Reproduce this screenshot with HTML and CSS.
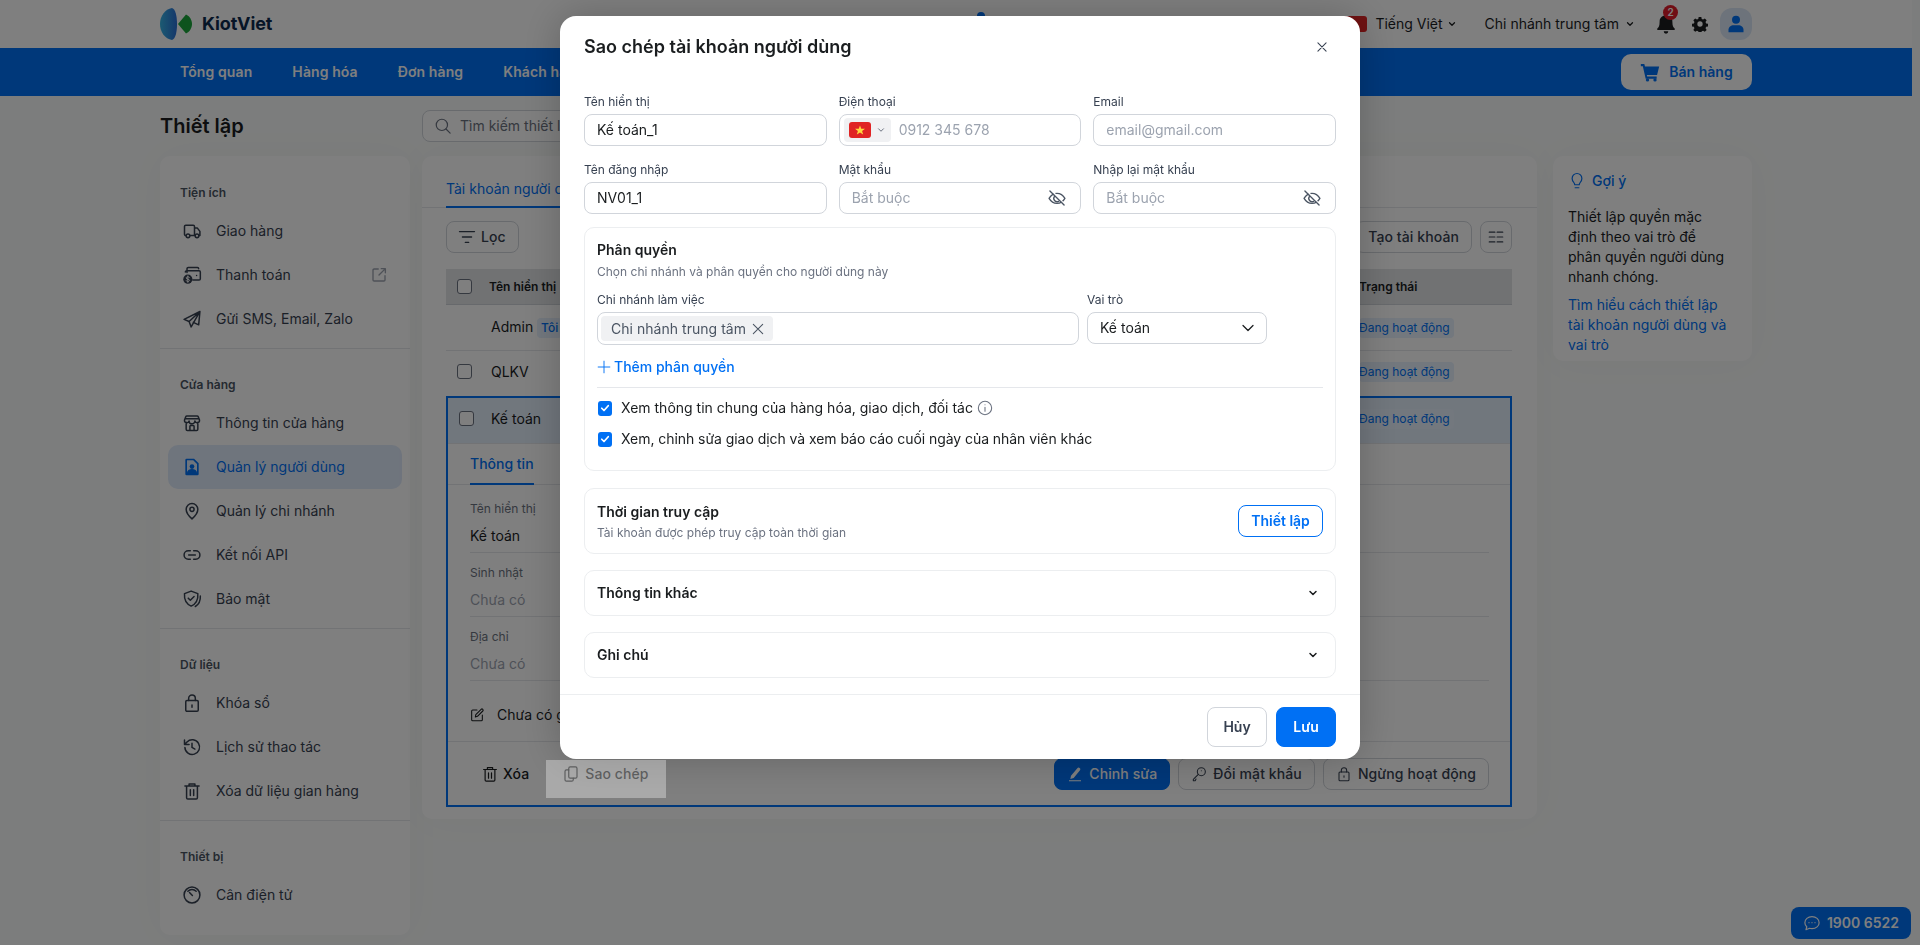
FILE: index.html
```html
<!DOCTYPE html>
<html lang="vi">
<head>
<meta charset="utf-8">
<title>Thiết lập</title>
<link rel="stylesheet" href="styles.css">
</head>
<body>
<svg class="sprite" width="0" height="0" aria-hidden="true">
  <symbol id="i-truck" viewBox="0 0 24 24"><path d="M5 17.5H4.5A1.5 1.5 0 0 1 3 16V6.5A1.5 1.5 0 0 1 4.5 5h9A1.5 1.5 0 0 1 15 6.5v11H9.5M15 8.5h3.5l3 4v5h-1M15.8 17.5H15"/><circle cx="7.2" cy="17.8" r="2.2"/><circle cx="18" cy="17.8" r="2.2"/></symbol>
  <symbol id="i-card" viewBox="0 0 24 24"><path d="M6 9V4.500A1.500 1.500 0 0 1 7.500 3h11A1.500 1.500 0 0 1 20 4.500M4 8.500A1.500 1.500 0 0 1 5.500 7h15A1.500 1.500 0 0 1 22 8.500v8a1.500 1.500 0 0 1-1.500 1.500H13M17.500 12.500h.01"/><circle class="fill" cx="7" cy="17" r="5.500"/><path class="coin" d="M9 15.200c-.5-.7-1.200-1-2-1-1.100 0-2 .6-2 1.400 0 1.800 4 1 4 2.800 0 .8-.9 1.400-2 1.400-.8 0-1.600-.3-2-1M7 13.200v7.600"/></symbol>
  <symbol id="i-plane" viewBox="0 0 24 24"><path d="M21.500 3 2.500 12.500l6 2.500 2.500 6.500zM21.500 3 8.500 15M21.500 3 20 19l-6.500-3"/></symbol>
  <symbol id="i-store" viewBox="0 0 24 24"><path d="M5 11v8.500A1.500 1.500 0 0 0 6.500 21h11a1.500 1.500 0 0 0 1.500-1.500V11M3 8.500 4.500 4.500A1.500 1.500 0 0 1 6 3.500h12a1.500 1.500 0 0 1 1.500 1L21 8.500a2.800 2.800 0 0 1-5.500 1 3.500 3.500 0 0 1-7 0 2.800 2.800 0 0 1-5.500-1ZM3.500 7h17M9.500 21v-5a1 1 0 0 1 1-1h3a1 1 0 0 1 1 1v5"/></symbol>
  <symbol id="i-userdoc" viewBox="0 0 24 24"><path class="fill doc" d="M5.500 2h9L20 7.500v13a1.500 1.500 0 0 1-1.500 1.500h-13A1.500 1.500 0 0 1 4 20.500v-17A1.500 1.500 0 0 1 5.500 2Zm.5 2v14.800a6 4.500 0 0 1 12 0V8.500L13.500 4Z"/><circle class="fill" cx="12" cy="11.500" r="2.800"/></symbol>
  <symbol id="i-pin" viewBox="0 0 24 24"><path d="M12 21.500S5 15.500 5 10a7 7 0 0 1 14 0c0 5.500-7 11.500-7 11.500Z"/><circle cx="12" cy="10" r="2.500"/></symbol>
  <symbol id="i-link" viewBox="0 0 24 24"><path d="M10 7H7.500a5 5 0 0 0 0 10H10M14 7h2.500a5 5 0 0 1 0 10H14M8 12h8"/></symbol>
  <symbol id="i-shield" viewBox="0 0 24 24"><path d="M11 2.500 19 5.500c.5 6.500-2.500 12.500-8 15-5.500-2.500-8.500-8.500-8-15ZM7.500 11l2.500 2.500 4.500-4.500M22 8.500c.3 5-2 10-6 12.500"/></symbol>
  <symbol id="i-lock" viewBox="0 0 24 24"><rect x="4.500" y="9" width="15" height="13" rx="1.500"/><path d="M8 9V6.500a4 4 0 0 1 8 0V9M12 14.500v2.500"/></symbol>
  <symbol id="i-history" viewBox="0 0 24 24"><path d="M3.500 12.500A8.800 8.800 0 1 0 6 6L3 9M3 3.500V9h5.500M12 7.500v5l3.500 2"/></symbol>
  <symbol id="i-trash" viewBox="0 0 24 24"><path d="M3.500 6h17M8.500 6V3.500h7V6M5.500 6v14a1.500 1.500 0 0 0 1.500 1.500h10a1.500 1.500 0 0 0 1.500-1.500V6M10 10.500v7M14 10.500v7"/></symbol>
  <symbol id="i-gauge" viewBox="0 0 24 24"><circle cx="12" cy="12" r="9.500"/><path d="M7 7.500a7 7 0 0 1 10 0M9 9l3.500 3.500"/></symbol>
  <symbol id="i-ext" viewBox="0 0 24 24"><path d="M11 4H5.500A1.500 1.500 0 0 0 4 5.500v13A1.500 1.500 0 0 0 5.500 20h13a1.500 1.500 0 0 0 1.500-1.500V13M12 12l8.500-8.500M15 3.500h5.500V9"/></symbol>
  <symbol id="i-eyeoff" viewBox="0 0 24 24"><path d="M2.500 12.500s3.500-6 9.500-6 9.500 6 9.500 6-3.500 6-9.500 6-9.500-6-9.500-6Z"/><path d="M9 10a4 4 0 0 0 5 6"/><path class="gap" d="M5 2.500l16 17"/><path d="M3.500 3.500l17 17"/></symbol>
  <symbol id="i-chev" viewBox="0 0 24 24"><path d="m6 9 6 6 6-6"/></symbol>
  <symbol id="i-x" viewBox="0 0 24 24"><path d="M5 5l14 14M19 5 5 19"/></symbol>
  <symbol id="i-add" viewBox="0 0 24 24"><path d="M12 2v20M2 12h20"/></symbol>
  <symbol id="i-edit" viewBox="0 0 24 24"><path d="M12 4.500H5.500A1.500 1.500 0 0 0 4 6v13a1.500 1.500 0 0 0 1.500 1.500h13A1.500 1.500 0 0 0 20 19v-7M9.500 15l.7-3.500 8-8a1.600 1.600 0 0 1 2.500 2.500l-8 8Z"/></symbol>
  <symbol id="i-copy" viewBox="0 0 24 24"><rect x="9" y="2.500" width="11" height="15" rx="2"/><path d="M9 6.500H6a2 2 0 0 0-2 2v11a2 2 0 0 0 2 2h7a2 2 0 0 0 2-2v-2"/></symbol>
  <symbol id="i-key" viewBox="0 0 24 24"><circle cx="15.500" cy="8.500" r="6"/><path d="M11 12.500 3.500 20v2h3l1-2.500M15.500 7h.01"/></symbol>
  <symbol id="i-filter" viewBox="0 0 24 24"><path d="M3 5.500h18M6.500 12h11M10 18.500h4"/></symbol>
  <symbol id="i-search" viewBox="0 0 24 24"><circle cx="10.500" cy="10.500" r="7.500"/><path d="m16 16 5.500 5.500"/></symbol>
  <symbol id="i-cols" viewBox="0 0 24 24"><path d="M3 5.500h7.500M13.500 5.500H21M3 12h7.500M13.500 12H21M3 18.500h7.500M13.500 18.500H21"/></symbol>
  <symbol id="i-bulb" viewBox="0 0 24 24"><path d="M9 17c0-3-3.500-4-3.500-8.500a6.500 6.500 0 0 1 13 0C18.500 13 15 14 15 17ZM9.500 21h5"/></symbol>
  <symbol id="i-chat" viewBox="0 0 24 24"><path d="M12 3.500c5.500 0 9.500 3.500 9.500 8s-4 8-9.500 8c-1.200 0-2.300-.2-3.300-.5L4 21l1-4c-1.500-1.400-2.500-3.300-2.500-5.500 0-4.500 4-8 9.500-8Z"/><path d="M8 11.500h.01M12 11.500h.01M16 11.500h.01"/></symbol>
  <symbol id="i-info" viewBox="0 0 24 24"><circle cx="12" cy="12" r="10"/><path d="M12 11v6M12 7h.01"/></symbol>
  <symbol id="i-check" viewBox="0 0 24 24"><path d="m5.500 12.500 4.500 4.500 8.500-9.500"/></symbol>
</svg>

<div class="page">
  <header class="hdr">
    <div class="wrap hdr-in">
      <div class="logo">
        <svg class="logo-mark" width="32" height="32" viewBox="0 0 32 32"><defs><linearGradient id="lg" x1="0" x2="1" y1="0" y2="0"><stop offset="0" stop-color="#38b4e4"/><stop offset="1" stop-color="#2a6fd6"/></linearGradient></defs><path fill="url(#lg)" d="M12 0C15.500 1 17 8 17 16S15.500 31 12 32C5 31 0 24 0 16S5 1 12 0Z"/><path fill="#1aa63a" d="M18 16 26 6.500C29.500 8 32 12 32 16S29.500 24 26 25.500Z"/></svg>
        <span class="logo-txt">KiotViet</span>
      </div>
      <span class="hdr-dot"></span>
      <div class="hdr-right">
        <span class="hdr-flag"></span>
        <span class="hdr-item lang">Tiếng Việt<svg class="ic-12 bold"><use href="#i-chev"/></svg></span>
        <span class="hdr-item branch">Chi nhánh trung tâm<svg class="ic-12 bold"><use href="#i-chev"/></svg></span>
        <span class="bell">
          <svg width="22" height="24" viewBox="0 0 24 24"><path fill="#1a1d1f" d="M12 1a2 2 0 0 1 2 1.800A7 7 0 0 1 19 10c0 4 .8 5.500 2.500 7v1.500h-19V17C4.200 15.500 5 14 5 10a7 7 0 0 1 5-7.200A2 2 0 0 1 12 1ZM9.500 20h5a2.500 2.500 0 0 1-5 0Z"/></svg>
          <span class="badge">2</span>
        </span>
        <svg class="gear" width="16" height="16" viewBox="0 0 24 24"><path fill="#1a1d1f" fill-rule="evenodd" d="M10 1.500h4l.6 3 2 .9 2.600-1.700 2.800 2.800-1.700 2.600.9 2 3 .6v4l-3 .6-.9 2 1.700 2.600-2.800 2.800-2.600-1.700-2 .9-.6 3h-4l-.6-3-2-.9-2.600 1.700-2.800-2.800 1.700-2.600-.9-2-3-.6v-4l3-.6.9-2L2 6.500l2.800-2.800 2.600 1.700 2-.9ZM12 8a4 4 0 1 0 0 8 4 4 0 0 0 0-8Z"/></svg>
        <span class="avatar"><svg width="20" height="20" viewBox="0 0 24 24"><circle cx="12" cy="7" r="4.800" fill="#0070f4"/><path fill="#0070f4" d="M3 22v-3c0-3.500 3-5.500 6-5.500h6c3 0 6 2 6 5.500v3Z"/></svg></span>
      </div>
    </div>
  </header>

  <nav class="nav">
    <div class="wrap nav-in">
      <a class="nav-a">Tổng quan</a>
      <a class="nav-a">Hàng hóa</a>
      <a class="nav-a">Đơn hàng</a>
      <a class="nav-a">Khách hàng</a>
      <button class="sell"><svg width="20" height="20" viewBox="0 0 24 24"><path fill="#0070f4" d="M1 2.500h4.200l.8 3H23l-2.500 10H8.200l.4 2H20v2.500H6.800L3.400 5H1Z"/><circle cx="9" cy="21.500" r="2" fill="#0070f4"/><circle cx="18" cy="21.500" r="2" fill="#0070f4"/></svg>Bán hàng</button>
    </div>
  </nav>

  <div class="wrap">
    <div class="title-row">
      <h1 class="h1">Thiết lập</h1>
      <div class="search"><svg class="ic-18 grey"><use href="#i-search"/></svg><span>Tìm kiếm thiết lập</span></div>
    </div>

    <div class="cols">
      <aside class="side">
        <section class="sec first">
          <div class="sec-t">Tiện ích</div>
          <a class="it"><svg class="ic"><use href="#i-truck"/></svg>Giao hàng</a>
          <a class="it"><svg class="ic"><use href="#i-card"/></svg>Thanh toán<svg class="ic ext"><use href="#i-ext"/></svg></a>
          <a class="it"><svg class="ic"><use href="#i-plane"/></svg>Gửi SMS, Email, Zalo</a>
        </section>
        <section class="sec">
          <div class="sec-t">Cửa hàng</div>
          <a class="it"><svg class="ic"><use href="#i-store"/></svg>Thông tin cửa hàng</a>
          <a class="it on"><svg class="ic"><use href="#i-userdoc"/></svg>Quản lý người dùng</a>
          <a class="it"><svg class="ic"><use href="#i-pin"/></svg>Quản lý chi nhánh</a>
          <a class="it"><svg class="ic"><use href="#i-link"/></svg>Kết nối API</a>
          <a class="it"><svg class="ic"><use href="#i-shield"/></svg>Bảo mật</a>
        </section>
        <section class="sec">
          <div class="sec-t">Dữ liệu</div>
          <a class="it"><svg class="ic"><use href="#i-lock"/></svg>Khóa sổ</a>
          <a class="it"><svg class="ic"><use href="#i-history"/></svg>Lịch sử thao tác</a>
          <a class="it"><svg class="ic"><use href="#i-trash"/></svg>Xóa dữ liệu gian hàng</a>
        </section>
        <section class="sec last">
          <div class="sec-t">Thiết bị</div>
          <a class="it"><svg class="ic"><use href="#i-gauge"/></svg>Cân điện tử</a>
        </section>
      </aside>

      <main class="main">
        <div class="tabs"><span class="tab">Tài khoản người dùng</span></div>
        <div class="bar">
          <button class="btn"><svg class="ic-20"><use href="#i-filter"/></svg>Lọc</button>
          <button class="btn push">Tạo tài khoản</button>
          <button class="btn square"><svg class="ic-18"><use href="#i-cols"/></svg></button>
        </div>
        <div class="tbl">
          <div class="row head"><span class="cb"></span><span>Tên hiển thị</span><span class="st">Trạng thái</span></div>
          <div class="row me-row"><span></span><span>Admin <em class="me">Tôi</em></span><span class="st"><span class="pill">Đang hoạt động</span></span></div>
          <div class="row"><span class="cb"></span><span>QLKV</span><span class="st"><span class="pill">Đang hoạt động</span></span></div>
          <div class="sel">
            <div class="row cur"><span class="cb"></span><span>Kế toán</span><span class="st"><span class="pill">Đang hoạt động</span></span></div>
            <div class="dtabs"><span class="dtab">Thông tin</span></div>
            <div class="fields">
              <div class="fld"><div class="fl">Tên hiển thị</div><div class="fv">Kế toán</div></div>
              <div class="fld"><div class="fl">Sinh nhật</div><div class="fv mute">Chưa có</div></div>
              <div class="fld"><div class="fl">Địa chỉ</div><div class="fv mute">Chưa có</div></div>
              <div class="note"><svg class="ic-16"><use href="#i-edit"/></svg>Chưa có ghi chú</div>
            </div>
            <div class="acts">
              <button class="ghost"><svg class="ic-18"><use href="#i-trash"/></svg>Xóa</button>
              <button class="ghost copy"><svg class="ic-18"><use href="#i-copy"/></svg>Sao chép</button>
              <button class="btn solid push"><svg width="16" height="16" viewBox="0 0 24 24"><path fill="#fff" d="M15.500 3.500a2.500 2.500 0 0 1 4 3L10 18l-5 1.500L6 14.500ZM3 21.500h18V23H3Z"/></svg>Chỉnh sửa</button>
              <button class="btn"><svg class="ic-16"><use href="#i-key"/></svg>Đổi mật khẩu</button>
              <button class="btn"><svg class="ic-16"><use href="#i-lock"/></svg>Ngừng hoạt động</button>
            </div>
          </div>
        </div>
      </main>

      <aside class="hint">
        <div class="hint-t"><svg class="ic-18"><use href="#i-bulb"/></svg>Gợi ý</div>
        <p class="hint-p">Thiết lập quyền mặc định theo vai trò để phân quyền người dùng nhanh chóng.</p>
        <a class="hint-a">Tìm hiểu cách thiết lập tài khoản người dùng và vai trò</a>
      </aside>
    </div>
  </div>

  <a class="hotline"><svg class="ic-18"><use href="#i-chat"/></svg>1900 6522</a>
</div>

<div class="backdrop">
  <div class="modal">
    <div class="m-head"><h2 class="m-title">Sao chép tài khoản người dùng</h2><svg class="ic-14 close"><use href="#i-x"/></svg></div>
    <div class="m-body">
      <div class="grid3">
        <label class="f"><span class="lb">Tên hiển thị</span><span class="inp">Kế toán_1</span></label>
        <label class="f"><span class="lb">Điện thoại</span>
          <span class="inp phone"><span class="ph-sel"><span class="flag"><svg width="10" height="10" viewBox="0 0 24 24"><path fill="#ffd83d" d="m12 1 3 8h9l-7 5.500 2.600 8.500L12 18l-7.600 5L7 14.500 0 9h9Z"/></svg></span><svg class="ic-10 dk"><use href="#i-chev"/></svg></span><span class="ph">0912 345 678</span></span>
        </label>
        <label class="f"><span class="lb">Email</span><span class="inp ph">email@gmail.com</span></label>
        <label class="f"><span class="lb">Tên đăng nhập</span><span class="inp">NV01_1</span></label>
        <label class="f"><span class="lb">Mật khẩu</span><span class="inp between"><span class="ph">Bắt buộc</span><svg class="ic-20 eye"><use href="#i-eyeoff"/></svg></span></label>
        <label class="f"><span class="lb">Nhập lại mật khẩu</span><span class="inp between"><span class="ph">Bắt buộc</span><svg class="ic-20 eye"><use href="#i-eyeoff"/></svg></span></label>
      </div>

      <section class="box perm">
        <h3 class="bt">Phân quyền</h3>
        <p class="bs">Chọn chi nhánh và phân quyền cho người dùng này</p>
        <div class="perm-row">
          <div class="pc-a"><span class="lb">Chi nhánh làm việc</span>
            <div class="multi"><span class="tag">Chi nhánh trung tâm<svg class="ic-16"><use href="#i-x"/></svg></span></div>
          </div>
          <div class="pc-b"><span class="lb">Vai trò</span>
            <div class="inp between">Kế toán<svg class="sel-chev"><use href="#i-chev"/></svg></div>
          </div>
        </div>
        <a class="add"><svg class="ic-14"><use href="#i-add"/></svg>Thêm phân quyền</a>
        <div class="hr"></div>
        <div class="chk"><span class="cbx"><svg class="ic-12 wh"><use href="#i-check"/></svg></span>Xem thông tin chung của hàng hóa, giao dịch, đối tác<svg class="ic-16 info"><use href="#i-info"/></svg></div>
        <div class="chk tight"><span class="cbx"><svg class="ic-12 wh"><use href="#i-check"/></svg></span>Xem, chỉnh sửa giao dịch và xem báo cáo cuối ngày của nhân viên khác</div>
      </section>

      <section class="box access">
        <div><h3 class="bt">Thời gian truy cập</h3><p class="bs">Tài khoản được phép truy cập toàn thời gian</p></div>
        <button class="outline">Thiết lập</button>
      </section>
      <section class="box fold"><h3 class="bt">Thông tin khác</h3><svg class="thick"><use href="#i-chev"/></svg></section>
      <section class="box fold"><h3 class="bt">Ghi chú</h3><svg class="thick"><use href="#i-chev"/></svg></section>
    </div>
    <div class="m-foot"><button class="f-btn">Hủy</button><button class="f-btn pri">Lưu</button></div>
  </div>
</div>
<div class="spot"></div>
</body>
</html>
```
FILE: styles.css
```css
*{box-sizing:border-box}
html,body{margin:0;height:945px;overflow:hidden}
body{background:#f9fbfa;font-family:Inter,"Noto Sans",sans-serif;font-size:14px;line-height:20px;color:#1a1d1f}
h1,h2,h3,p{margin:0}
button{font:inherit;color:inherit;background:none;border:0;padding:0;white-space:nowrap}
em{font-style:normal}
.sprite{position:absolute}
svg{flex:none;fill:none;stroke:currentColor;stroke-width:1.6;stroke-linecap:round;stroke-linejoin:round}
.fill{fill:currentColor;stroke:none}
.doc{fill-rule:evenodd}
.coin{stroke:#fff;stroke-width:1.2}
.gap{stroke:#fff;stroke-width:1.8}
.ic-10{width:10px;height:10px}
.ic-12{width:12px;height:12px}
.ic-14{width:14px;height:14px}
.ic-16{width:16px;height:16px}
.ic-18{width:18px;height:18px}
.ic-20{width:20px;height:20px}
.bold,.thick{stroke-width:3}
.grey{color:#6b7280}

.page{width:1912px;height:945px;position:relative}
.wrap{width:1592px;margin:0 auto}

.hdr{height:48px;background:#fff}
.hdr-in{display:flex;align-items:center;height:48px}
.logo{display:flex;align-items:center;gap:10px;width:113px}
.logo-mark,.logo-mark path{stroke:none}
.logo-txt{font-size:18px;font-weight:700;color:#0d2b4e;letter-spacing:-.1px;line-height:24px}
.hdr-dot{width:8px;height:8px;border-radius:50%;background:#0070f4;align-self:flex-start;margin:12px 0 0 704px}
.hdr-right{margin-left:auto;display:flex;align-items:center}
.hdr-flag{width:24px;height:16px;border-radius:3px;background:#e02424;margin-right:8px}
.hdr-item{display:flex;align-items:center;gap:4px}
.hdr-item svg{width:10px;height:10px}
.lang{margin-right:28px}
.branch{margin-right:21px;gap:6px}
.bell{position:relative;display:flex;margin-right:15px;margin-left:-1px}
.bell svg,.bell path{stroke:none}
.badge{position:absolute;left:8px;top:-7px;width:15px;height:15px;border-radius:50%;background:#e11d2a;color:#fff;font-size:10px;line-height:15px;font-weight:600;text-align:center}
.gear{margin-right:12px}
.gear,.gear path{stroke:none}
.avatar{width:32px;height:32px;border-radius:12px;background:#dbe7f6;display:flex;align-items:center;justify-content:center}
.avatar svg,.avatar path,.avatar circle{stroke:none}

.nav{height:48px;background:#0070f4}
.nav-in{display:flex;align-items:center;height:48px}
.nav-a{padding:0 20px;color:#fff;font-weight:600;letter-spacing:.1px}
.sell{margin-left:auto;width:131px;height:36px;background:#fff;border-radius:10px;color:#0070f4;font-weight:600;display:flex;align-items:center;justify-content:center;gap:9px}
.sell svg,.sell path,.sell circle{stroke:none}

.title-row{display:flex;align-items:center;height:60px}
.h1{width:262px;font-size:20px;line-height:28px;font-weight:600}
.search{width:300px;height:32px;border:1px solid #d1d5db;border-radius:8px;display:flex;align-items:center;gap:8px;padding-left:11px;color:#6b7280;background:#fff}

.cols{display:flex;align-items:flex-start}
.side{width:250px;margin-right:12px;background:#fff;border-radius:10px;box-shadow:0 0 40px rgba(0,0,0,.03)}
.sec{padding:24px 8px 7px;border-bottom:1px solid #e5e7eb}
.sec.first{padding-top:25px}
.sec.last{border-bottom:0;padding-bottom:18px}
.sec-t{height:24px;line-height:24px;padding-left:12px;font-size:12px;font-weight:600;color:#4b5563;margin-bottom:4px}
.it{height:44px;display:flex;align-items:center;gap:14px;padding-left:15px;padding-right:14px;border-radius:10px;color:#374151}
.ic{width:20px;height:20px;margin-left:-1px;stroke-width:1.8}
.ext{margin-left:auto;color:#9ca3af;width:18px;height:18px}
.it.on{background:#dfeafb;color:#0070f4}

.main{flex:1;background:#fff;border-radius:10px;padding:0 25px 12px 24px;box-shadow:0 0 40px rgba(0,0,0,.03);position:relative}
.tabs{height:52px;margin:0 -25px 0 -24px;padding:0 24px;border-bottom:1px solid #e5e7eb;display:flex}
.tab{padding:23px 0 0;border-bottom:2px solid #0070f4;margin-bottom:-1px;color:#0070f4;width:300px}
.bar{display:flex;gap:8px;margin:13px 0 16px}
.btn{height:32px;border:1px solid #d1d5db;border-radius:8px;padding:0 12px;display:flex;align-items:center;gap:6px;font-weight:500;background:#fff;color:#374151;letter-spacing:.1px}
.bar .btn:first-child{width:73px;padding-left:10px;gap:4px}
.push{margin-left:auto}
.square{width:32px;padding:0;justify-content:center}

.row{display:grid;grid-template-columns:45px 1fr 153px;align-items:center;height:46px;padding-bottom:4px;border-bottom:1px solid #e5e7eb}
.me-row{padding-bottom:1px}
.row>.cb{margin-top:-1px}
.head{grid-template-columns:43px 1fr 153px;height:36px;padding-bottom:0;background:#e2e4e6;font-size:12px;font-weight:600;border-bottom:1px solid #cfd3d8}
.cb{width:15px;height:15px;border:1px solid #6b7280;border-radius:3px;margin-left:11px;display:block;background:#fff}
.me{display:inline-block;background:#e6f0fd;color:#0070f4;font-size:12px;font-weight:500;padding:0 4px;border-radius:4px;line-height:20px}
.pill{display:inline-block;background:#e6f0fd;color:#0070f4;font-size:12px;line-height:20px;padding:0 4px 0 0;border-radius:4px}
.sel{border:2px solid #0070f4;margin-top:-1px}
.cur{height:46px;background:#e3eefb;grid-template-columns:43px 1fr 151px}
.dtabs{height:41px;border-bottom:1px solid #e5e7eb;padding-left:22px;display:flex}
.dtab{padding-top:10px;color:#0070f4;font-weight:500;width:64px;border-bottom:2px solid #0070f4;margin-bottom:-1px}
.fields{padding:4px 21px 0 22px}
.fld{padding:12px 0 6px;border-bottom:1px solid #e5e7eb}
.fl{font-size:12px;line-height:16px;color:#6b7280;margin-bottom:9px}
.mute{color:#9ca3af}
.note{height:60px;display:flex;align-items:center;gap:12px;padding-top:8px;color:#1a1d1f;margin-left:-1px}
.acts{border-top:1px solid #e5e7eb;padding:16px 21px 15px 22px;display:flex;align-items:center;gap:8px}
.ghost{height:32px;padding:0 12px 0 11px;display:flex;align-items:center;gap:4px;font-weight:500;letter-spacing:.1px}
.copy{margin-left:2px;gap:5px}
.solid{background:#0070f4;border-color:#0070f4;color:#fff;width:116px;padding:0;justify-content:center}
.solid svg,.solid path{stroke:none}

.hint{width:199px;margin-left:16px;background:#fff;border-radius:10px;padding:15px 21px 6px 15px;height:205px;box-shadow:0 0 40px rgba(0,0,0,.03)}
.hint-t{display:flex;align-items:center;gap:6px;color:#0070f4;font-weight:500;margin-bottom:16px}
.hint-p{color:#1a1d1f;margin-bottom:8px}
.hint-a{color:#0070f4;display:block}
.hotline{position:absolute;left:1791px;top:907px;width:120px;height:32px;background:#0070f4;border-radius:8px;color:#fff;font-weight:600;display:flex;align-items:center;justify-content:center;gap:6px}

.backdrop{position:fixed;inset:0;background:rgba(0,0,0,.5);display:flex;justify-content:center;align-items:flex-start;padding-top:16px}
.modal{width:800px;height:743px;background:#fff;border-radius:16px;box-shadow:0 0 40px rgba(0,0,0,.22);display:flex;flex-direction:column}
.m-head{height:62px;padding:0 24px;display:flex;align-items:center;justify-content:space-between}
.m-title{font-size:18px;line-height:28px;font-weight:600}
.close{margin-right:7px;color:#374151;stroke-width:1.8}
.m-body{padding:16px 24px 16px;flex:1}
.grid3{display:grid;grid-template-columns:repeat(3,1fr);gap:16px 12px}
.f{display:block}
.lb{display:block;font-size:12px;line-height:16px;margin-bottom:4px;color:#374151}
.inp{height:32px;border:1px solid #d1d5db;border-radius:8px;display:flex;align-items:center;padding:0 12px;background:#fff}
.ph{color:#9ca3af}
.between{justify-content:space-between}
.eye{color:#4b5563;margin-right:1px}
.phone{padding:0 0 0 4px;gap:8px}
.ph-sel{width:47px;height:24px;background:#f0f1f3;border-radius:4px;display:flex;align-items:center;padding-left:5px;gap:5px}
.dk{color:#6b7280;stroke-width:2.4}
.flag{width:22px;height:16px;border-radius:3px;background:#e02424;display:flex;align-items:center;justify-content:center}
.flag svg,.flag path{stroke:none}
.box{border:1px solid #eceef0;border-radius:10px;margin-top:16px;padding:0 12px}
.bt{font-size:14px;line-height:20px;font-weight:600}
.bs{font-size:12px;line-height:16px;color:#6b7280;margin-top:3px}
.perm{margin-top:13px;height:244px;padding-top:12px}
.perm .bs{margin-top:4px}
.perm-row{display:flex;gap:8px;margin-top:12px}
.pc-a{width:482px}
.pc-b{width:180px}
.multi{height:33px;border:1px solid #d1d5db;border-radius:8px;padding:3px}
.tag{display:inline-flex;align-items:center;gap:4px;height:25px;padding:0 7px 0 10px;background:#f0f1f3;border-radius:4px;color:#4b5563;letter-spacing:.03px}
.sel-chev{width:20px;height:20px;margin-right:-4px;stroke-width:1.5}
.add{display:flex;align-items:center;gap:3px;color:#0070f4;font-weight:500;margin-top:12px}
.hr{height:1px;background:#e5e7eb;margin:10px 0}
.chk{display:flex;align-items:center;height:20px;margin-bottom:11px;padding-left:1px}
.tight{letter-spacing:-.055px}
.cbx{width:14px;height:15px;border-radius:3px;background:#0070f4;display:flex;align-items:center;justify-content:center;margin-right:9px}
.wh{color:#fff;stroke-width:3.4}
.info{margin-left:4px;color:#6b7280}
.access{margin-top:17px;height:66px;display:flex;align-items:center;justify-content:space-between}
.outline{width:85px;height:32px;border:1px solid #0070f4;border-radius:8px;color:#0070f4;font-weight:600}
.fold{height:46px;display:flex;align-items:center;justify-content:space-between}
.fold svg{margin-right:4px;width:12px;height:12px}
.m-foot{height:65px;border-top:1px solid #eceef0;padding:12px 24px;display:flex;justify-content:flex-end;gap:9px}
.f-btn{width:60px;height:40px;border:1px solid #d1d5db;border-radius:8px;font-weight:600;color:#374151;background:#fff}
.pri{background:#0070f4;border-color:#0070f4;color:#fff}
.spot{position:fixed;left:546px;top:760px;width:120px;height:38px;background:rgba(255,255,255,.33)}
```
